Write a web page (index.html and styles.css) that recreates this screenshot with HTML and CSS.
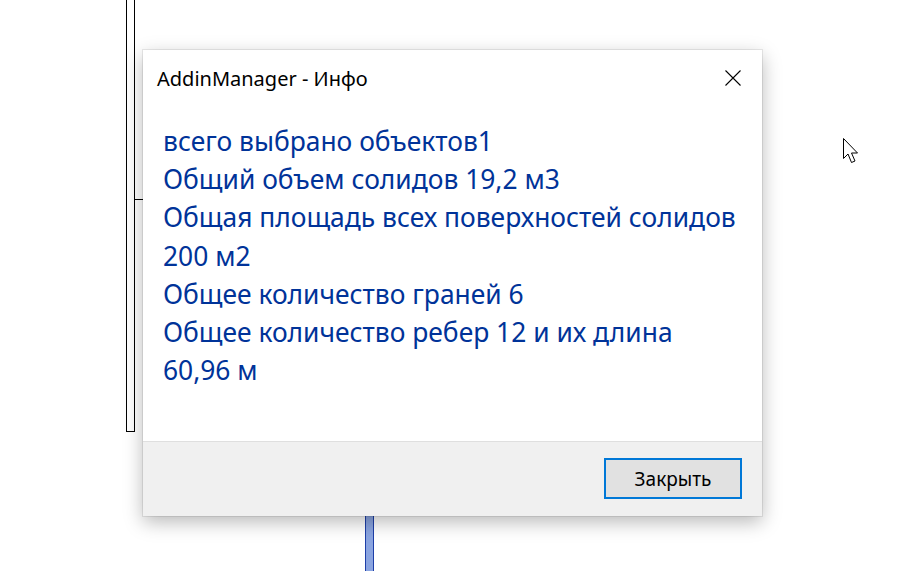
FILE: index.html
```html
<!DOCTYPE html>
<html lang="ru">
<head>
<meta charset="utf-8">
<title>AddinManager - Инфо</title>
<link rel="stylesheet" href="styles.css">
</head>
<body>
<div class="desktop">
  <div class="frame-rect"></div>
  <div class="frame-tick"></div>
  <div class="blue-bar"></div>

  <div class="dialog">
    <div class="titlebar">
      <span class="title">AddinManager - Инфо</span>
      <button class="close" aria-label="Закрыть">
        <svg width="16" height="16" viewBox="0 0 16 16"><path d="M0.5 0.5 L15.5 15.5 M15.5 0.5 L0.5 15.5" stroke="#000" stroke-width="1.1" fill="none"/></svg>
      </button>
    </div>
    <div class="content">
      <p class="line">всего выбрано объектов1</p>
      <p class="line">Общий объем солидов 19,2 м3</p>
      <p class="line">Общая площадь всех поверхностей солидов</p>
      <p class="line">200 м2</p>
      <p class="line">Общее количество граней 6</p>
      <p class="line">Общее количество ребер 12 и их длина</p>
      <p class="line">60,96 м</p>
    </div>
    <div class="footer">
      <button class="btn">Закрыть</button>
    </div>
  </div>

  <svg class="cursor" width="20" height="28" viewBox="0 0 20 28">
    <path d="M0.5 0.5 L0.5 20.5 L5 16 L8.5 24.5 L12 23 L8.5 15 L14.5 15 Z" fill="#fff" stroke="#000" stroke-width="1" stroke-linejoin="miter"/>
  </svg>
</div>
</body>
</html>
```
FILE: styles.css
```css
html, body {
  margin: 0;
  padding: 0;
  background: #ffffff;
}
.desktop {
  position: relative;
  width: 907px;
  height: 571px;
  overflow: hidden;
  background: #ffffff;
  font-family: "Noto Sans", "Open Sans", sans-serif;
}
.frame-rect {
  position: absolute;
  left: 126px;
  top: -2px;
  width: 7px;
  height: 432px;
  border: 1px solid #000;
}
.frame-tick {
  position: absolute;
  left: 134px;
  top: 199px;
  width: 12px;
  height: 1px;
  background: #000;
}
.blue-bar {
  position: absolute;
  left: 365px;
  top: 510px;
  width: 7px;
  height: 70px;
  background: #8aa4e0;
  border-left: 1px solid #1e3fa8;
  border-right: 1px solid #1e3fa8;
}
.dialog {
  position: absolute;
  left: 143px;
  top: 50px;
  width: 619px;
  height: 466px;
  background: #ffffff;
  display: flex;
  flex-direction: column;
  box-shadow: 0 0 0 1px rgba(0,0,0,0.08), 0 6px 18px rgba(0,0,0,0.28);
}
.titlebar {
  display: flex;
  align-items: center;
  justify-content: space-between;
  height: 56px;
  padding: 0 21px 0 14px;
}
.title {
  font-size: 20px;
  color: #000;
}
.close {
  border: none;
  background: transparent;
  padding: 0;
  width: 16px;
  height: 16px;
  display: flex;
}
.content {
  flex: 1;
  padding: 16px 0 0 20px;
  color: #003399;
  font-size: 26.4px;
}
.line {
  margin: 0;
  line-height: 38.2px;
  white-space: nowrap;
}
.footer {
  height: 75px;
  background: #f0f0f0;
  border-top: 1px solid #dfdfdf;
  display: flex;
  justify-content: flex-end;
  align-items: flex-start;
  padding: 16px 20px 0 0;
  box-sizing: border-box;
}
.btn {
  width: 138px;
  height: 41px;
  border: 2px solid #0078d7;
  background: #e1e1e1;
  font-family: "Noto Sans", "Open Sans", sans-serif;
  font-size: 19px;
  color: #000;
  padding: 0;
}
.cursor {
  position: absolute;
  left: 843px;
  top: 138px;
}
```
